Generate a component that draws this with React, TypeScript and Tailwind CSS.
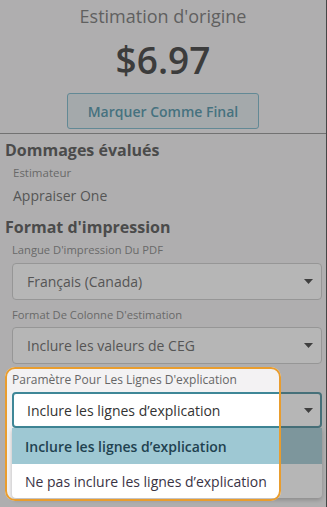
import React from "react";

const font = { fontFamily: '"Open Sans", "Noto Sans", sans-serif' };

const Caret = () => (
  <svg width="9" height="5" viewBox="0 0 9 5" className="shrink-0">
    <path d="M0 0 L9 0 L4.5 5 Z" fill="#333333" />
  </svg>
);

const SelectBox = ({ value, focused }: { value: string; focused?: boolean }) => (
  <div
    className={`flex items-center justify-between rounded-[4px] bg-white text-[14px] ${
      focused
        ? "h-[36px] border-2 border-[#3f8797] pl-[13px] pr-[7px] text-[#333]"
        : "h-[37px] border border-[#c8c8c8] pl-[14px] pr-[8px] text-[#585858]"
    }`}
  >
    <span>{value}</span>
    <Caret />
  </div>
);

const App = () => {
  return (
    <div
      className="relative h-[507px] w-[327px] overflow-hidden border-r border-[#464646] bg-[#f3f2f3]"
      style={font}
    >
      {/* Header */}
      <div className="flex flex-col items-center pt-[3px]">
        <h2 className="text-[18px] leading-[26px] text-[#6b6b6b]">Estimation d'origine</h2>
        <div className="mt-[7px] text-[37px] font-semibold leading-[48px] text-[#2d2d2d]">$6.97</div>
        <button className="mt-[9px] h-[36px] w-[192px] rounded-[3px] border border-[#6fb2c6] bg-[#e1e9ed] text-[14px] font-semibold text-[#3d8aa0]">
          Marquer Comme Final
        </button>
      </div>
      <div className="mt-[4px] h-px w-full bg-[#8a8a8a]" />

      {/* Damages */}
      <div className="pl-[5px] pr-[4px]">
        <h3 className="mt-[5px] text-[16px] font-bold leading-[22px] text-[#474747]">Dommages évalués</h3>
        <div className="pl-[8px]">
          <div className="mt-[4px] text-[11.5px] leading-[16px] text-[#7a7a7a]">Estimateur</div>
          <div className="mt-[5px] text-[14px] leading-[20px] text-[#595959]">Appraiser One</div>
        </div>

        <h3 className="mt-[10px] text-[16px] font-bold leading-[22px] text-[#474747]">Format d'impression</h3>
        <div className="pl-[7px]">
          <div className="mt-[4px] text-[11.2px] leading-[16px] text-[#7a7a7a]">Langue D'impression Du PDF</div>
          <div className="mt-[5px]">
            <SelectBox value="Français (Canada)" />
          </div>
          <div className="mt-[7px] text-[11.2px] leading-[16px] text-[#7a7a7a]">Format De Colonne D'estimation</div>
          <div className="mt-[4px]">
            <SelectBox value="Inclure les valeurs de CEG" />
          </div>
          <div className="mt-[8px] text-[12px] leading-[16px] text-[#666]">
            Paramètre Pour Les Lignes D'explication
          </div>
          <div className="relative mt-[4px]">
            <SelectBox value="Inclure les lignes d’explication" focused />
            {/* Open dropdown */}
            <div className="absolute left-0 right-0 top-full z-10 overflow-hidden rounded-b-[4px] bg-white shadow-[0_2px_4px_rgba(0,0,0,0.25)]">
              <div className="flex h-[36px] items-center bg-[#9ec8d3] pl-[13px] text-[14px] font-semibold text-[#1f4250]">
                Inclure les lignes d’explication
              </div>
              <div className="flex h-[34px] items-center pl-[13px] text-[14px] text-[#3a3344]">
                Ne pas inclure les lignes d’explication
              </div>
            </div>
          </div>
        </div>
      </div>

      {/* Walkthrough spotlight */}
      <div className="pointer-events-none absolute left-[5px] top-[367px] z-20 h-[134px] w-[276px] rounded-[10px] border-2 border-[#e99d2e] shadow-[0_0_0_9999px_rgba(80,80,80,0.42)]" />
    </div>
  );
};

export default App;
